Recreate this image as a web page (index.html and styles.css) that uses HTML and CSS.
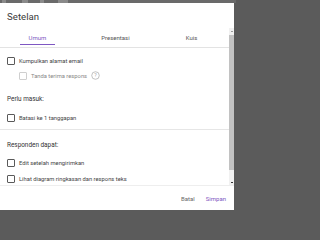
FILE: index.html
```html
<!DOCTYPE html>
<html>
<head>
<meta charset="utf-8">
<link rel="stylesheet" href="styles.css">
</head>
<body>
<div class="topbar">
  <span class="ghost g1"></span><span class="ghost g2"></span><span class="ghost g3"></span><span class="ghost g4"></span>
</div>
<div class="page">
  <div class="dialog">
    <div class="title">Setelan</div>
    <div class="scrollwrap">
      <div class="content">
        <div class="tabs">
          <div class="tab active"><span>Umum</span></div>
          <div class="tab"><span>Presentasi</span></div>
          <div class="tab"><span>Kuis</span></div>
        </div>
        <div class="section first">
          <div class="row"><span class="cb"></span><span class="label">Kumpulkan alamat email</span></div>
          <div class="row sub"><span class="cb disabled"></span><span class="label muted">Tanda terima respons</span>
            <svg class="help" viewBox="0 0 10 10" width="9" height="9"><circle cx="5" cy="5" r="4.2" fill="none" stroke="#aaa" stroke-width="0.8"/><text x="5" y="7.2" font-size="6" text-anchor="middle" fill="#aaa" font-family="Roboto">?</text></svg>
          </div>
          <div class="heading">Perlu masuk:</div>
          <div class="row"><span class="cb"></span><span class="label">Batasi ke 1 tanggapan</span></div>
        </div>
        <div class="section second">
          <div class="heading">Responden dapat:</div>
          <div class="row tight"><span class="cb"></span><span class="label">Edit setelah mengirimkan</span></div>
          <div class="row tight"><span class="cb"></span><span class="label">Lihat diagram ringkasan dan respons teks</span></div>
        </div>
      </div>
      <div class="scrollbar">
        <div class="arrow up"></div>
        <div class="track"><div class="thumb"></div></div>
        <div class="arrow down"></div>
      </div>
    </div>
    <div class="footer">
      <span class="btn cancel">Batal</span>
      <span class="btn save">Simpan</span>
    </div>
  </div>
</div>
</body>
</html>
```
FILE: styles.css
```css
html, body {
  margin: 0;
  padding: 0;
}
body {
  width: 236px;
  height: 214px;
  background: #5b5b5b;
  font-family: Roboto, "Liberation Sans", sans-serif;
  overflow: hidden;
}
.topbar {
  height: 3px;
  display: flex;
  gap: 0;
  background: #6a6a6a;
}
.ghost {
  height: 3px;
  background: #8a8a8a;
  margin-left: 14px;
}
.g1 { width: 4px; margin-left: 2px; }
.g2 { width: 6px; margin-left: 16px; }
.g3 { width: 4px; margin-left: 12px; }
.g4 { width: 10px; margin-left: 14px; }
.page {
  display: flex;
}
.dialog {
  width: 234px;
  height: 207px;
  background: #fff;
  display: flex;
  flex-direction: column;
}
.title {
  height: 25px;
  box-sizing: border-box;
  padding: 8px 0 0 7px;
  font-size: 9.6px;
  line-height: 11px;
  color: #3a3a3a;
  letter-spacing: 0.05px;
}
.scrollwrap {
  height: 157px;
  display: flex;
  overflow: hidden;
}
.content {
  width: 229px;
  overflow: hidden;
}
.tabs {
  display: grid;
  grid-template-columns: 77px 77px 75px;
  height: 20px;
  box-sizing: border-box;
  border-bottom: 1px solid #e3e3e3;
}
.tab {
  display: flex;
  justify-content: center;
  align-items: flex-start;
  font-size: 6px;
  color: #555;
  padding-top: 6px;
}
.tab span {
  display: block;
  height: 11px;
  line-height: 7px;
}
.tab.active span {
  color: #7e57c2;
  border-bottom: 1.6px solid #7e57c2;
  padding: 0 9px;
  box-sizing: border-box;
  width: 35px;
  text-align: center;
  margin-left: -3px;
}
.section {
  padding-left: 7px;
}
.section.first {
  padding-top: 5px;
  padding-bottom: 4px;
  border-bottom: 1px solid #e6e6e6;
}
.section.second {
  padding-top: 8px;
}
.row {
  display: flex;
  align-items: center;
  height: 15px;
}
.row.tight {
  height: 16px;
}
.row.sub {
  padding-left: 12px;
}
.cb {
  width: 8px;
  height: 8px;
  box-sizing: border-box;
  border: 1.2px solid #5a5a5a;
  border-radius: 1px;
  margin-right: 4px;
  flex: none;
}
.cb.disabled {
  border-color: #cfcfcf;
}
.label {
  font-size: 5.8px;
  color: #444;
  white-space: nowrap;
}
.label.muted {
  color: #888;
}
.help {
  margin-left: 4px;
}
.heading {
  font-size: 6.4px;
  color: #333;
  height: 15px;
  line-height: 15px;
}
.section.first .heading {
  margin-top: 9px;
  margin-bottom: 3px;
}
.section.second .heading {
  margin-bottom: 2px;
}
.scrollbar {
  width: 5px;
  display: flex;
  flex-direction: column;
  background: #f1f1f1;
}
.arrow {
  height: 6px;
  position: relative;
}
.arrow.up::after, .arrow.down::after {
  content: "";
  position: absolute;
  left: 1.5px;
  width: 2px;
  height: 1px;
  background: #999;
  top: 3px;
}
.arrow.down::after {
  background: #333;
}
.track {
  flex: 1;
  padding-top: 1px;
}
.thumb {
  height: 135px;
  background: #c2c2c2;
}
.footer {
  height: 25px;
  display: flex;
  justify-content: flex-end;
  align-items: center;
  gap: 11px;
  padding-right: 8px;
  box-sizing: border-box;
  border-top: 1px solid #eee;
  font-size: 6px;
}
.btn.cancel {
  color: #666;
}
.btn.save {
  color: #7e57c2;
}
```
